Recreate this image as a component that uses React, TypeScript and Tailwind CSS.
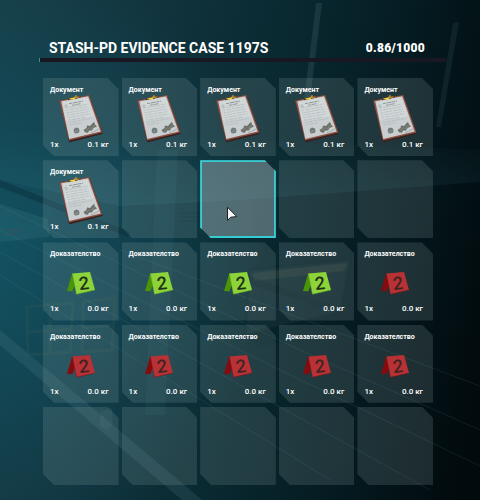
import React from "react";
import { clsx } from "clsx";

type Kind = "document" | "green" | "red";

const slots: (Kind | null)[] = [
  "document", "document", "document", "document", "document",
  "document", null, null, null, null,
  "green", "green", "green", "green", "red",
  "red", "red", "red", "red", "red",
  null, null, null, null, null,
];

const SELECTED = 7;

function Clipboard() {
  return (
    <svg viewBox="0 0 46 50" className="h-[50px] w-[46px]" aria-hidden="true">
      <path d="M1.5 7.5 L11 49 L12 49.2 L44.5 41 L44.6 39.6 L31.5 2.2 Z" fill="#3a2221" />
      <path d="M1.2 7.6 L31.2 2 L44.4 39.4 L11 47.6 Z" fill="#8d5144" />
      <path d="M3.2 8.3 L30.2 3.2 L42.6 38.4 L11.3 46 Z" fill="#c9cfd0" />
      <path d="M5 9 L29.5 4.6 L36 23 L8 28 Z" fill="#d9dede" opacity="0.55" />
      <g stroke="#a3acae" strokeWidth="0.5" strokeDasharray="3 0.7 5 0.6" fill="none">
        <path d="M11 10.7 L25 8.1" stroke="#858e90" strokeWidth="0.9" />
        <path d="M14 12.3 L23 10.6" stroke="#858e90" strokeWidth="0.8" />
        <path d="M7 15.2 L29.5 11.2" />
        <path d="M7.6 17.6 L30.2 13.6" />
        <path d="M8.2 20 L31 16" />
        <path d="M8.8 22.4 L31.8 18.4" />
        <path d="M9.4 24.8 L32.6 20.8" />
        <path d="M10 27.2 L28 24" />
        <path d="M10.6 29.6 L34 25.4" />
        <path d="M11.3 32 L24 29.7" />
      </g>
      <circle cx="8" cy="13" r="1.2" fill="none" stroke="#929a9b" strokeWidth="0.5" />
      <path d="M15.8 36 L18 34.6 L20.8 35.2 L21.6 38 L20.6 40 L17 40.6 L15.8 39 Z" fill="#747b7b" />
      <path d="M17 38.6 L20.4 37.8" stroke="#a7aeae" strokeWidth="0.5" />
      <path d="M25.5 37 L28.5 35 L29 32.4 L32 33 L36 28.8 L37 31.5 L39 33.5 L35.5 35 L34 37.5 L31 37.4 L30 39.8 L27 39.3 Z" fill="#6d6f69" />
      <path d="M28 37.5 L31.5 34.5 M33 36 L36.5 32" stroke="#9b9e97" strokeWidth="0.6" />
      <path d="M33 40 L41 36" stroke="#91999a" strokeWidth="0.7" />
      <path d="M10 7.2 L22.5 4.6 L22 2.9 L10.7 5.2 Z" fill="#332c1f" />
      <path d="M11 5.3 L16.4 4.2 L17 2.4 L18.6 2.1 L18.8 3.8 L21.6 3.3 L21.5 4.4 L11.4 6.5 Z" fill="#c18c31" />
      <path d="M12.3 5.5 L17 4.6 L16.8 6.2 L12.8 6.8 Z" fill="#f3de3f" />
    </svg>
  );
}

function Marker({ red }: { red: boolean }) {
  return (
    <svg viewBox="0 0 30 24" className="mt-[3px] h-[24px] w-[30px]" aria-hidden="true">
      <path d="M6.2 2.4 L1 20 L6.4 20.3 L9.2 13 L12 8 Z" fill={red ? "#850b0e" : "#4a9506"} />
      <path d="M6.2 2.4 L24 1 L29 19 L10.4 23.3 Z" fill={red ? "#b83134" : "#8dd43a"} />
      <path d="M6.2 2.4 L10.4 23.3 L29 19" fill="none" stroke={red ? "#6b1519" : "#5e9d27"} strokeWidth="0.5" />
      <text
        x="17.8"
        y="18.5"
        textAnchor="middle"
        transform="rotate(-6 17.8 12)"
        fill={red ? "#3f2423" : "#203018"}
        className="font-['Roboto',sans-serif] text-[18px] font-medium"
      >
        2
      </text>
    </svg>
  );
}

function Pointer() {
  return (
    <svg viewBox="0 0 12 16" className="absolute top-[46px] left-[26px] h-4 w-3" aria-hidden="true">
      <path d="M1.5 1.2 L1.5 14.3 L4.8 11.2 L10.8 10.6 Z" fill="#f6f6f6" stroke="#1d1f21" strokeWidth="1" strokeLinejoin="round" />
    </svg>
  );
}

function Slot({ kind, selected }: { kind: Kind | null; selected: boolean }) {
  const isDocument = kind === "document";
  return (
    <li className="relative">
      <button
        type="button"
        aria-label={kind ? undefined : "Empty slot"}
        aria-pressed={selected}
        className={clsx(
          "flex h-full w-full flex-col px-[7px] pt-[7px] text-left text-[8px] leading-[10px] font-medium text-white [clip-path:polygon(0_0,calc(100%-11px)_0,100%_11px,100%_100%,11px_100%,0_calc(100%-11px))]",
          selected
            ? "border-2 border-[#35cdd2] bg-[#9fb2b7]/48"
            : "bg-[#9cb0b2]/18"
        )}
      >
        {kind && (
          <>
            <span className="text-[7px] font-bold">{isDocument ? "Документ" : "Доказателство"}</span>
            <span className="flex h-[45px] items-center justify-center">
              {isDocument ? <Clipboard /> : <Marker red={kind === "red"} />}
            </span>
            <span className="flex justify-between pr-[3px]">
              <span>1x</span>
              <span>{isDocument ? "0.1 кг" : "0.0 кг"}</span>
            </span>
          </>
        )}
      </button>
      {selected && <Pointer />}
    </li>
  );
}

function Backdrop() {
  return (
    <svg viewBox="0 0 480 500" preserveAspectRatio="none" className="absolute inset-0 h-full w-full" aria-hidden="true">
      <defs>
        <linearGradient id="beam" x1="0" y1="0" x2="0" y2="1">
          <stop offset="0" stopColor="#4d9dab" stopOpacity="0" />
          <stop offset="1" stopColor="#4d9dab" stopOpacity="0.11" />
        </linearGradient>
      </defs>
      <path d="M0 130 L480 150 V182 L240 200 L120 206 L0 180 Z" fill="url(#beam)" />
      <path d="M0 204 L48 219 L50 237 L0 242 Z" fill="#438591" opacity="0.2" />
      <path d="M157 150 L178 150 L165 415 L145 415 Z" fill="#5ba0aa" opacity="0.07" />
      <path d="M316 3 L322 3 L310 100 L304 100 Z" fill="#719ca3" opacity="0.16" />
      <path d="M453 23 L459 22 L441 127 L436 127 Z" fill="#719ca3" opacity="0.1" />
      <g stroke="#69a4ac" strokeWidth="1" opacity="0.12" fill="none">
        <path d="M0 206 L300 350 L480 430" />
        <path d="M0 230 L280 370 L480 466" />
        <path d="M0 252 L430 490" />
        <path d="M0 275 L330 480" />
        <path d="M120 250 L480 386" />
      </g>
      <path d="M180 213h26M180 217h24M180 221h22" stroke="#031c23" strokeWidth="1" opacity="0.3" />
      <path d="M7 230h14M7 234h10" stroke="#6c4651" strokeWidth="1" opacity="0.5" />
      <path d="M0 180 L130 232 L128 237 L0 187 Z" fill="#052630" opacity="0.35" />
      <path d="M0 330 L202 500 L182 500 L0 345 Z" fill="#7badb3" opacity="0.13" />
      <path d="M100 412 L112 408 L113 424 L107 430 L100 426 Z" fill="#6c9ca2" opacity="0.1" />
      <g fill="none" stroke="#586d50" strokeWidth="3" opacity="0.13">
        <path d="M27 307 L73 303 L70 352 L28 355 Z M27 332 L72 329 M50 305 V354" />
        <path d="M83 302 L115 298 L112 350 L82 352 Z M83 328 L114 325" />
      </g>
      <path d="M250 270 L350 260 L340 312 L245 335 Z" fill="#53615f" fillOpacity="0.1" stroke="#021b21" strokeWidth="3" strokeOpacity="0.25" />
      <path d="M253 273 L347 263 L344 271 L254 281 Z" fill="#8a8150" opacity="0.12" />
      <path d="M245 275 L340 308 L340 314 L245 283 Z" fill="#02171d" opacity="0.2" />
      <path d="M245 335 L345 320 L400 325 L260 346 Z" fill="#02171d" opacity="0.2" />
    </svg>
  );
}

export default function App() {
  return (
    <main className="relative min-h-screen overflow-hidden bg-[radial-gradient(ellipse_55%_60%_at_0%_50%,rgba(16,95,115,0.62),transparent),linear-gradient(100deg,#173d46_0%,#12353f_25%,#0a2a32_50%,#041a20_75%,#020a0d_96%)] font-['Roboto','Noto_Sans',sans-serif]">
      <Backdrop />
      <div className="relative pt-[39px] pr-[34px] pb-[15px] pl-[39px]">
        <header className="flex h-[19px] items-start justify-between pr-[21px] pl-[10px] text-white">
          <h1 className="text-[14px] leading-[18px] font-bold">STASH-PD EVIDENCE CASE 1197S</h1>
          <span className="text-[12px] leading-[18px] font-black tracking-wide">0.86/1000</span>
        </header>
        <div
          role="progressbar"
          aria-label="Weight"
          aria-valuenow={0.86}
          aria-valuemin={0}
          aria-valuemax={1000}
          className="h-[4px] border-l border-[#16a394] bg-[#191722]"
        />
        <ul className="mt-[16px] mr-[13px] ml-[4px] grid h-[407px] grid-cols-5 grid-rows-5 gap-x-[3px] gap-y-1">
          {slots.map((kind, i) => (
            <Slot key={i} kind={kind} selected={i === SELECTED} />
          ))}
        </ul>
      </div>
    </main>
  );
}
